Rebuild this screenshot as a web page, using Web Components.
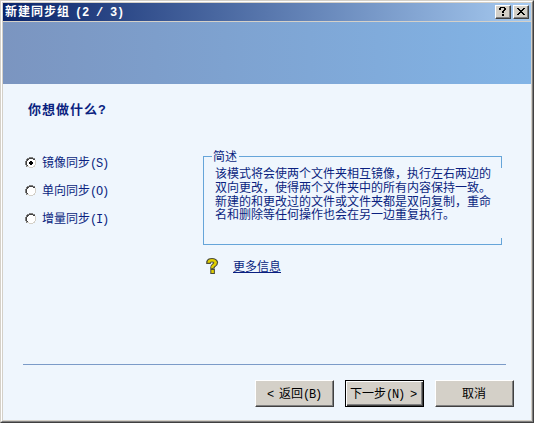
<!DOCTYPE html>
<html lang="zh-CN">
<head>
<meta charset="utf-8">
<title>新建同步组</title>
<style>
html,body{margin:0;height:100%;overflow:hidden}
body{font:12px/14px "Liberation Mono","Noto Sans CJK SC",monospace;color:#0a1f80}
</style>
</head>
<body>
<sync-wizard></sync-wizard>
<script>
function define(name, html) {
  const t = document.createElement('template');
  t.innerHTML = html;
  customElements.define(name, class extends HTMLElement {
    constructor() {
      super();
      this.attachShadow({mode: 'open'}).appendChild(t.content.cloneNode(true));
    }
  });
}
define('half-width', `<style>:host{display:inline-block;white-space:pre;letter-spacing:var(--track,-1.2px);line-height:inherit;margin-left:var(--lead,0)}</style><slot></slot>`);
define('caption-button', `<style>
:host{display:block;box-sizing:border-box;width:16px;height:14px;background:#d4d0c8;border:1px solid;border-color:#fff #404040 #404040 #fff;box-shadow:inset -1px -1px #808080}
::slotted(svg){display:block}</style><slot></slot>`);
define('title-bar', `<style>
:host{display:flex;box-sizing:border-box;height:18px;padding:0 2px;align-items:center;background:linear-gradient(90deg,#0a246a,#a6caf0);color:#fff;font-weight:700;line-height:18px;--track:-.2px;--lead:5px}
.t{flex:1;letter-spacing:1px;white-space:pre;padding-top:2px}
.b{display:flex;gap:2px}</style>
<div class="t"><slot></slot></div><div class="b">
<caption-button><svg width="14" height="12" shape-rendering="crispEdges"><path d="M4 1h5v1H4zM3 2h2v2H3zM8 2h2v2H8zM7 4h2v1H7zM6 5h2v2H6zM6 8h2v2H6z" fill="#000"/></svg></caption-button>
<caption-button><svg width="14" height="12" shape-rendering="crispEdges"><path d="M3 2h2v1H3zM9 2h2v1H9zM4 3h2v1H4zM8 3h2v1H8zM5 4h4v1H5zM6 5h2v1H6zM5 6h4v1H5zM4 7h2v1H4zM8 7h2v1H8zM3 8h2v1H3zM9 8h2v1H9z" fill="#000"/></svg></caption-button></div>`);
define('radio-option', `<style>
:host{display:flex;height:14px;gap:5px;align-items:center}
span{padding-top:2px}
svg{display:block}.dot{display:none}:host([checked]) .dot{display:block}</style>
<svg width="12" height="12" shape-rendering="crispEdges"><path d="M4 1h4v1h2v2h1v4h-1v2H8v1H4v-1H2V8H1V4h1V2h2z" fill="#fff"/>
<path d="M4 0h4v1H4zM2 1h2v1H2zM8 1h2v1H8zM1 2h1v2H1zM0 4h1v4H0zM1 8h1v2H1z" fill="#808080"/>
<path d="M4 1h4v1H4zM2 2h2v1H2zM8 2h2v1H8zM2 3h1v1H2zM1 4h1v4H1zM2 8h1v1H2z" fill="#404040"/>
<path d="M10 3h1v1h-1zM10 4h1v4h-1zM9 8h1v1H9zM8 9h2v1H8zM4 10h4v1H4zM2 9h2v1H2z" fill="#d4d0c8"/>
<path class="dot" d="M5 4h2v1h1v2H7v1H5V7H4V5h1z" fill="#000"/></svg><span><slot></slot></span>`);
define('group-box', `<style>
:host{display:block;box-sizing:border-box;width:299px;height:96px;position:relative;padding:20px 0 0 12px;line-height:13.8px;white-space:nowrap;--l:linear-gradient(#66a5d9,#66a5d9);
background:var(--l) 0 7px/100% 1px no-repeat,var(--l) 0 95px/100% 1px no-repeat,var(--l) 0 7px/1px 89px no-repeat,var(--l) 100% 7px/1px 12px no-repeat,var(--l) 100% 89px/1px 7px no-repeat}
.label{position:absolute;left:9px;top:2px;padding:0 2px 0 1px;line-height:14px;background:#eff6fd}
</style><span class="label"><slot name="label"></slot></span><slot></slot>`);
define('help-link', `<style>
:host{display:flex;gap:14px;align-items:center}svg{display:block}
a{text-decoration:none;line-height:18px;height:14px;box-shadow:inset 0 -1px #0a1f80}</style>
<svg width="13" height="16" viewBox="0 0 13 16" fill="none"><path d="M2.5 6V4Q3 2.3 6 2.3T9.8 4.4Q9.8 6 8 7.2T6.6 10.5M6.6 10.5V16" stroke="#4c4c38" stroke-width="4.6"/><path d="M2.7 4.8V4.2Q3.2 2.3 6 2.3T9.7 4.5Q9.7 6 7.8 7.2T6.6 10M6.6 12v3" stroke="#e2d000" stroke-width="2.5"/></svg><a><slot></slot></a>`);
define('push-button', `<style>
:host{display:flex;flex:none;box-sizing:border-box;width:79px;height:27px;padding:2px 1px 0 0;align-items:center;justify-content:center;background:#d4d0c8;color:#000;border:1px solid;border-color:#fff #404040 #404040 #fff;box-shadow:inset -1px -1px #808080;white-space:pre}
:host([default]){padding-right:3px;border-color:#000;box-shadow:inset 1px 1px #fff,inset -1px -1px #404040,inset -2px -2px #808080}</style><slot></slot>`);
define('sync-wizard', `<style>
:host{display:flex;flex-direction:column;box-sizing:border-box;width:534px;height:423px;border:1px solid;border-color:#d4d0c8 #404040 #404040 #d4d0c8}
.in{flex:1;display:flex;flex-direction:column;border:1px solid;border-color:#fff #808080 #808080 #fff}
.c{flex:1;display:flex;flex-direction:column;border:1px solid #d4d0c8}
.banner{height:62px;border-top:1px solid #d4d0c8;background:linear-gradient(90deg,#7b95c0,#82b4e6)}
main{flex:1;background:#eff6fd;padding:0 20px;display:flex;flex-direction:column}
h1{margin:19px 0 0 5px;font-size:13px;line-height:16px;font-weight:700;letter-spacing:1px}
.mid{display:flex;margin-top:30px}
.radios{display:flex;flex-direction:column;gap:14px;width:174px;margin:7px 0 0 2px;flex:none}
.right{margin-left:4px}
help-link{margin:13px 0 0 3px}
hr{width:483px;height:1px;border:0;background:#7b9bc8;margin:auto 0 15px}
.buttons{display:flex;margin-left:232px;gap:11px;padding-bottom:13px}
</style><div class="in"><div class="c">
<title-bar>新建同步组<half-width>(2 / 3)</half-width></title-bar>
<div class="banner"></div>
<main><h1>你想做什么?</h1>
<div class="mid"><div class="radios"><radio-option checked>镜像同步<half-width>(S)</half-width></radio-option><radio-option>单向同步<half-width>(O)</half-width></radio-option><radio-option>增量同步<half-width>(I)</half-width></radio-option></div>
<div class="right"><group-box><span slot="label">简述</span>该模式将会使两个文件夹相互镜像，执行左右两边的<br>双向更改，使得两个文件夹中的所有内容保持一致。<br>新建的和更改过的文件或文件夹都是双向复制，重命<br>名和删除等任何操作也会在另一边重复执行。</group-box>
<help-link>更多信息</help-link></div></div>
<hr><div class="buttons"><push-button><half-width>&lt; </half-width>返回<half-width>(B)</half-width></push-button><push-button default>下一步<half-width>(N) &gt;</half-width></push-button><push-button>取消</push-button></div>
</main></div></div>`);
</script>
</body>
</html>
